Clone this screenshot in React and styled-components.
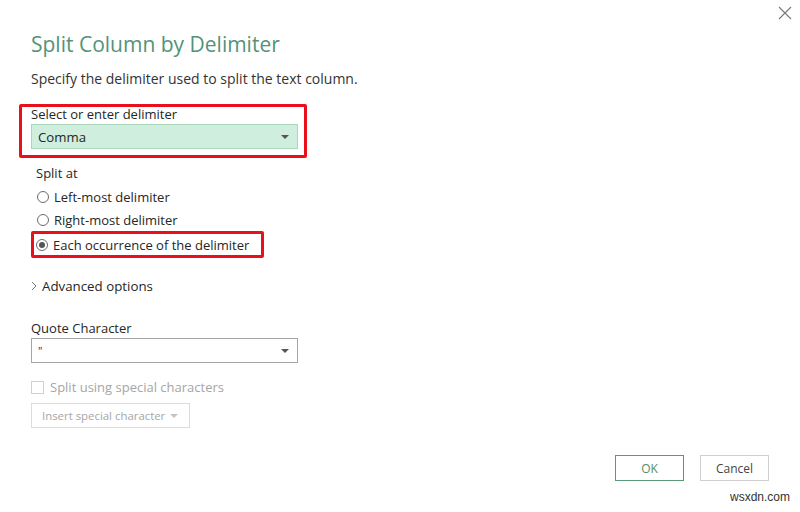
import React from "react";
import styled, { createGlobalStyle } from "styled-components";

const GlobalStyle = createGlobalStyle`
  html, body {
    margin: 0;
    padding: 0;
    background: #ffffff;
  }
  body {
    font-family: "Open Sans", "Noto Sans", sans-serif;
    color: #262626;
  }
`;

const StyledDialog = styled.div`
  position: relative;
  width: 800px;
  height: 512px;
  box-sizing: border-box;
  padding: 28px 31px 31px 31px;
  background: #ffffff;
  display: flex;
  flex-direction: column;
  overflow: hidden;
`;

const StyledCloseButton = styled.button`
  position: absolute;
  top: 4px;
  right: 6px;
  width: 18px;
  height: 18px;
  padding: 0;
  border: none;
  background: transparent;
  display: flex;
  align-items: center;
  justify-content: center;
`;

const StyledTitle = styled.h1`
  margin: 0;
  font-size: 21px;
  font-weight: 400;
  line-height: 32px;
  color: #52937a;
`;

const StyledSubtitle = styled.p`
  margin: 9px 0 0 0;
  font-size: 14px;
  line-height: 20px;
  color: #333333;
`;

const StyledHighlight = styled.div`
  margin: ${(p) => p.$margin || "0"};
  padding: ${(p) => p.$padding || "0"};
  width: ${(p) => p.$width};
  box-sizing: border-box;
  border: 3px solid #e8101a;
  border-radius: 2px;
`;

const StyledField = styled.div`
  display: flex;
  flex-direction: column;
  gap: 3px;
`;

const StyledLabel = styled.span`
  font-size: 13px;
  line-height: ${(p) => p.$lineHeight || "14px"};
  color: ${(p) => (p.$muted ? "#a6a6a6" : "#262626")};
`;

const StyledSelect = styled.div`
  width: 267px;
  height: 25px;
  box-sizing: border-box;
  padding: 0 8px 0 6px;
  background: ${(p) => (p.$active ? "#cfeedd" : "#ffffff")};
  border: 1px solid ${(p) => (p.$active ? "#a9d8bd" : "#a6a6a6")};
  display: flex;
  align-items: center;
  justify-content: space-between;
  font-size: 13.2px;
  color: #262626;
`;

const StyledQuoteGlyph = styled.span`
  font-size: 11px;
`;

const StyledCaret = styled.span`
  width: 0;
  height: 0;
  border-left: 4px solid transparent;
  border-right: 4px solid transparent;
  border-top: 4px solid ${(p) => (p.$muted ? "#c4c4c4" : "#555555")};
`;

const StyledRadioGroup = styled.div`
  margin: 4px 0 0 5px;
  display: flex;
  flex-direction: column;
`;

const StyledRadioRow = styled.label`
  height: ${(p) => p.$height || "23px"};
  display: flex;
  align-items: center;
  gap: 5px;
  font-size: 13px;
  color: #262626;
`;

const StyledRadio = styled.span`
  width: 12px;
  height: 12px;
  margin-left: 1px;
  box-sizing: border-box;
  border: 1px solid #6b6b6b;
  border-radius: 50%;
  background: #ffffff;
  display: flex;
  align-items: center;
  justify-content: center;

  &::after {
    content: "";
    width: 6px;
    height: 6px;
    border-radius: 50%;
    background: ${(p) => (p.$checked ? "#555555" : "transparent")};
  }
`;

const StyledAdvanced = styled.div`
  margin-top: 19px;
  display: flex;
  align-items: center;
  gap: 5px;
  font-size: 13.3px;
  color: #262626;
`;

const StyledQuoteField = styled(StyledField)`
  margin-top: 26px;
`;

const StyledCheckRow = styled.div`
  margin-top: 17px;
  display: flex;
  align-items: center;
  gap: 6px;
`;

const StyledCheckbox = styled.span`
  width: 13px;
  height: 13px;
  box-sizing: border-box;
  border: 1px solid #d0d0d0;
  background: #ffffff;
`;

const StyledSpecialButton = styled.div`
  margin-top: 9px;
  width: 159px;
  height: 25px;
  box-sizing: border-box;
  border: 1px solid #dcdcdc;
  padding: 0 11px 0 10px;
  display: flex;
  align-items: center;
  justify-content: space-between;
  font-size: 11.4px;
  color: #a6a6a6;
`;

const StyledFooter = styled.div`
  margin-top: auto;
  display: flex;
  justify-content: flex-end;
  gap: 16px;
  padding-right: 0;
`;

const StyledButton = styled.button`
  width: 69px;
  height: 26px;
  box-sizing: border-box;
  background: #ffffff;
  border: 1px solid ${(p) => (p.$primary ? "#5a9a78" : "#cfcfcf")};
  font-family: inherit;
  font-size: 12px;
  color: ${(p) => (p.$primary ? "#4f8f6c" : "#444444")};
  padding: 0;
`;

const StyledWatermark = styled.span`
  position: absolute;
  right: 10px;
  bottom: 8px;
  font-family: "Liberation Sans", Arial, sans-serif;
  font-size: 12px;
  color: #333333;
`;

const ChevronRight = () => (
  <svg width="6" height="10" viewBox="0 0 6 10">
    <path d="M1 1 L5 5 L1 9" fill="none" stroke="#777" strokeWidth="1" />
  </svg>
);

const CloseIcon = () => (
  <svg width="14" height="14" viewBox="0 0 14 14">
    <path d="M1 1 L13 13 M13 1 L1 13" stroke="#777" strokeWidth="1.1" />
  </svg>
);

const splitOptions = [
  { label: "Left-most delimiter", checked: false },
  { label: "Right-most delimiter", checked: false },
];

const App = () => {
  return (
    <>
      <GlobalStyle />
      <StyledDialog>
        <StyledCloseButton aria-label="Close">
          <CloseIcon />
        </StyledCloseButton>

        <StyledTitle>Split Column by Delimiter</StyledTitle>
        <StyledSubtitle>Specify the delimiter used to split the text column.</StyledSubtitle>

        <StyledHighlight $margin="15px 0 0 -12px" $padding="0 6px 6px 9px" $width="288px">
          <StyledField>
            <StyledLabel>Select or enter delimiter</StyledLabel>
            <StyledSelect $active>
              Comma
              <StyledCaret />
            </StyledSelect>
          </StyledField>
        </StyledHighlight>

        <StyledRadioGroup>
          <StyledLabel $lineHeight="23px">Split at</StyledLabel>
          {splitOptions.map((o) => (
            <StyledRadioRow key={o.label}>
              <StyledRadio $checked={o.checked} />
              {o.label}
            </StyledRadioRow>
          ))}
          <StyledHighlight $margin="0 0 0 -5px" $padding="0 0 0 1px" $width="233px">
            <StyledRadioRow $height="21px">
              <StyledRadio $checked />
              Each occurrence of the delimiter
            </StyledRadioRow>
          </StyledHighlight>
        </StyledRadioGroup>

        <StyledAdvanced>
          <ChevronRight />
          Advanced options
        </StyledAdvanced>

        <StyledQuoteField>
          <StyledLabel>Quote Character</StyledLabel>
          <StyledSelect>
            <StyledQuoteGlyph>"</StyledQuoteGlyph>
            <StyledCaret />
          </StyledSelect>
        </StyledQuoteField>

        <StyledCheckRow>
          <StyledCheckbox />
          <StyledLabel $muted>Split using special characters</StyledLabel>
        </StyledCheckRow>

        <StyledSpecialButton>
          Insert special character
          <StyledCaret $muted />
        </StyledSpecialButton>

        <StyledFooter>
          <StyledButton $primary>OK</StyledButton>
          <StyledButton>Cancel</StyledButton>
        </StyledFooter>

        <StyledWatermark>wsxdn.com</StyledWatermark>
      </StyledDialog>
    </>
  );
};

export default App;
